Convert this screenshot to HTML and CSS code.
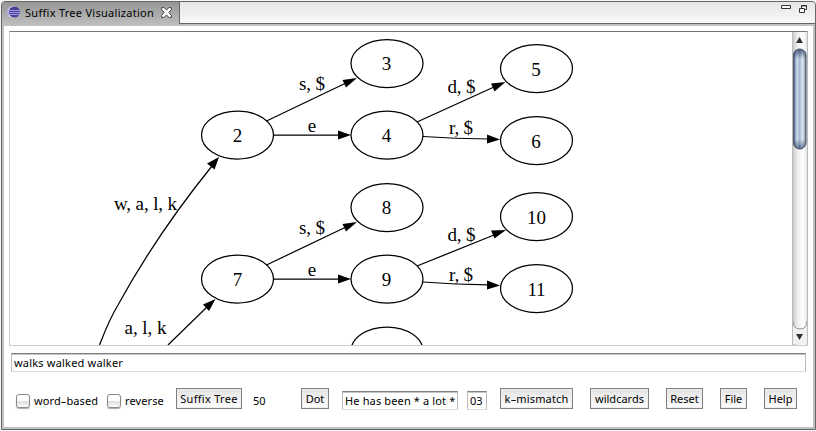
FILE: index.html
```html
<!DOCTYPE html>
<html lang="en">
<head>
<meta charset="utf-8">
<title>Suffix Tree Visualization</title>
<link rel="stylesheet" href="styles.css">
</head>
<body>
<main class="window">
  <header class="titlebar">
    <div class="tab">
      <svg class="logo" width="14" height="14" viewBox="0 0 14 14">
        <circle cx="6.200" cy="7" r="6" fill="#d9c8ea"/>
        <circle cx="7.400" cy="7" r="5.600" fill="#4c3f91"/>
        <path d="M0 5.500h13M0 7.500h13.500M1 9.500h12" stroke="#9c9ce8" stroke-width="1"/>
      </svg>
      <span class="t-title">Suffix Tree Visualization</span>
      <svg class="close" width="11" height="11" viewBox="0 0 11 11">
        <path d="M.6.6h2.6l2.3 2.5L7.8.6h2.6v2L7.800 5.500l2.600 2.900v2H7.800L5.500 7.900l-2.300 2.500H.6v-2l2.600-2.900L.6 2.600z" fill="#fff" stroke="#444"/>
      </svg>
    </div>
    <div class="strip">
      <svg width="10" height="5" viewBox="0 0 10 5"><path d="M.5.5h9v3h-9z" fill="#fff" stroke="#333"/></svg>
      <svg width="8" height="8" viewBox="0 0 8 8"><path d="M2.500.5h5v4h-5z" fill="#fff" stroke="#333"/><path d="M2 1h6" stroke="#333"/><path d="M.5 3.500h5v4h-5z" fill="#fff" stroke="#333"/></svg>
    </div>
  </header>
  <section class="body">
    <div class="canvas">
      <svg class="graph" width="782" height="313" viewBox="10 32 782 313">
        <g class="edges">
          <path d="M99.500 345C105 331 109 320 118 305C141 263 170 218 212 166"/>
          <path d="M168 345L207 307"/>
          <path d="M266.500 121L346 83"/><path d="M274 135H340"/>
          <path d="M417 122L494 87"/><path d="M423 136.500Q455 138.500 489 139"/>
          <path d="M266.500 265L346 227"/><path d="M274 279H340"/>
          <path d="M417 266L494 235"/><path d="M423 282Q455 284.500 489 284.800"/>
        </g>
        <g class="heads">
          <path d="M219 157L214.500 169.500L207 163.500z"/>
          <path d="M215.500 299L209 311L203 304.500z"/>
          <path d="M357 78L346 87.500L342.500 80z"/><path d="M351 135L338 139.500V130.500z"/>
          <path d="M505.500 82L494.500 91.500L491 83.500z"/><path d="M500 139.500L487 143.500V134.500z"/>
          <path d="M357 222L346 231.500L342.500 224z"/><path d="M351 279L338 283.500V274.500z"/>
          <path d="M506 230L494.500 238.500L491 230.500z"/><path d="M500 285.500L487 289.500V280.500z"/>
        </g>
        <g class="nodes">
          <ellipse cx="387" cy="63.500" rx="36" ry="24"/><ellipse cx="536.500" cy="68.500" rx="36" ry="24"/>
          <ellipse cx="237.500" cy="135" rx="36" ry="24"/><ellipse cx="387" cy="135" rx="36" ry="24"/>
          <ellipse cx="536.500" cy="140.500" rx="36" ry="24"/><ellipse cx="387" cy="207.500" rx="36" ry="24"/>
          <ellipse cx="536.500" cy="216.500" rx="36" ry="24"/><ellipse cx="237.500" cy="279" rx="36" ry="24"/>
          <ellipse cx="387" cy="279" rx="36" ry="24"/><ellipse cx="536.500" cy="288.500" rx="36" ry="24"/>
          <ellipse cx="387" cy="351" rx="36" ry="24"/>
        </g>
        <g class="labels">
          <text x="386.500" y="70">3</text><text x="536" y="76">5</text><text x="237.500" y="142">2</text>
          <text x="386.500" y="142">4</text><text x="536" y="148">6</text><text x="386.500" y="214">8</text>
          <text x="536.500" y="224">10</text><text x="237.500" y="286">7</text><text x="386.500" y="286">9</text>
          <text x="536.500" y="296" textLength="18">11</text>
          <text x="312" y="90" textLength="26">s, $</text><text x="312" y="132">e</text>
          <text x="461.500" y="93" textLength="28">d, $</text><text x="461" y="134" textLength="24">r, $</text>
          <text x="312" y="234" textLength="26">s, $</text><text x="312" y="276">e</text>
          <text x="461.500" y="241" textLength="28">d, $</text><text x="461" y="281" textLength="24">r, $</text>
          <text x="145.500" y="210" textLength="63">w, a, l, k</text><text x="145.500" y="334" textLength="42">a, l, k</text>
        </g>
      </svg>
      <svg class="scroll" width="16" height="313" viewBox="0 0 16 313">
        <defs>
          <linearGradient id="track"><stop offset="0" stop-color="#c4c4c4"/><stop offset=".35" stop-color="#eee"/><stop offset=".7" stop-color="#fff"/><stop offset="1" stop-color="#ddd"/></linearGradient>
          <linearGradient id="thumb"><stop offset="0" stop-color="#2c4166"/><stop offset=".13" stop-color="#8a9fbd"/><stop offset=".3" stop-color="#d0deec"/><stop offset=".48" stop-color="#a3b7cd"/><stop offset=".72" stop-color="#dde7f0"/><stop offset=".9" stop-color="#a3b1c0"/><stop offset="1" stop-color="#55616f"/></linearGradient>
          <linearGradient id="shade" x2="0" y2="1"><stop offset="0" stop-color="#102347" stop-opacity=".7"/><stop offset=".1" stop-color="#27436b" stop-opacity="0"/><stop offset=".9" stop-color="#27436b" stop-opacity="0"/><stop offset="1" stop-color="#102347" stop-opacity=".6"/></linearGradient>
        </defs>
        <path d="M0 0h16v313H0z" fill="url(#track)"/>
        <path d="M1 289Q1 297 8 297T15 289V312H1z" fill="#f1f1f1"/>
        <path d="M1 289Q1 297 8 297T15 289" fill="none" stroke="#999"/>
        <rect x="1.500" y="17" width="12.500" height="100" rx="6.200" fill="url(#thumb)"/>
        <rect x="1.500" y="17" width="12.500" height="100" rx="6.200" fill="url(#shade)" stroke="#4b586d"/>
        <path d="M7.500 5L11 11H4zM7.500 308L11 302H4z" fill="#333"/>
        <path d="M.5 0V313M15.500 0V313" stroke="#bbb"/>
      </svg>
    </div>
    <div class="field source"><span class="t-source">walks walked walker</span></div>
    <div class="controls">
      <i class="check"></i><span class="label t-word">word–based</span>
      <i class="check second"></i><span class="label t-reverse">reverse</span>
      <span class="btn b-suffix">Suffix Tree</span>
      <span class="label count">50</span>
      <span class="btn b-dot">Dot</span>
      <div class="field phrase"><span>He has been * a lot *</span></div>
      <div class="field number"><span>03</span></div>
      <span class="btn b-mismatch">k–mismatch</span>
      <span class="btn b-wild">wildcards</span>
      <span class="btn b-reset">Reset</span>
      <span class="btn b-file">File</span>
      <span class="btn b-help">Help</span>
    </div>
  </section>
</main>
</body>
</html>
```
FILE: styles.css
```css
* { box-sizing: border-box; }
body { margin: 0; background: #f4f4f4; color: #000; font: 11px/14px "Noto Sans", sans-serif; white-space: nowrap; overflow: hidden; }
.window { width: 815px; height: 429px; margin: 1px 0 0 1px; border: 1px solid #666; border-radius: 4px 4px 0 0; background: #c2c2c2; display: flex; flex-direction: column; overflow: hidden; }
.titlebar { display: flex; height: 24px; flex: none; }
.tab { width: 177px; display: flex; background: linear-gradient(#959595, #c0c0c0); }
.logo { margin: 3px 0 0 5px; }
.t-title { margin: 4px 0 0 4px; width: 130px; letter-spacing: .28px; }
.close { margin: 5px 0 0 6px; flex: none; }
.strip { flex: 1; height: 22px; border-left: 1px solid #666; border-bottom: 1px solid #666; background: linear-gradient(#e6e6e6, #f8f8f8); display: flex; justify-content: flex-end; gap: 8px; padding: 3px 8px 0 0; }
.body { flex: 1; margin: 0 2px 2px 2px; padding: 5px 5px 0; background: #fff; display: flex; flex-direction: column; }
.canvas { display: flex; flex: none; width: 799px; height: 315px; border: 1px solid #ccc; border-top-color: #777; }
.graph, .scroll { display: block; flex: none; }
.edges, .nodes { fill: none; stroke: #000; stroke-width: 1.25px; }
.labels { font: 19px "Liberation Serif", serif; text-anchor: middle; }
.field { border: 1px solid #bbb; border-top-color: #808080; border-bottom-color: #ddd; box-shadow: inset 0 1px 0 #c4c4c4; background: #fff; height: 19px; flex: none; padding: 1px 0 0 2px; line-height: 15px; }
.source { margin: 7px 0 0 2px; width: 795px; }
.t-source { letter-spacing: .2px; }
.controls { display: flex; align-items: flex-start; margin: 16px 0 0 7px; }
.check { width: 14px; height: 14px; margin-top: 6px; border: 1px solid #888; border-radius: 3px; background: linear-gradient(#fff 45%, #ddd 55%, #fff); box-shadow: 0 1px 1px #aaa; flex: none; }
.second { margin-left: 9px; }
.label { margin: 6px 0 0 4px; flex: none; }
.t-word { width: 64px; letter-spacing: .1px; }
.t-reverse { width: 39px; letter-spacing: .1px; }
.btn { height: 21px; margin-left: 17px; border: 1px solid #808080; box-shadow: inset 0 0 0 1px #eee; background: linear-gradient(#e2e2e2, #fff); line-height: 20px; text-align: center; flex: none; }
.b-suffix { width: 66px; margin-left: 12px; letter-spacing: .3px; }
.count { width: 14px; margin-left: 11px; }
.b-dot { width: 28px; margin-left: 34px; }
.phrase { width: 116px; margin: 3px 0 0 13px; letter-spacing: .14px; }
.number { width: 20px; margin: 3px 0 0 9px; }
.b-mismatch { width: 73px; margin-left: 13px; letter-spacing: .15px; }
.b-wild { width: 59px; }
.b-reset { width: 37px; }
.b-file { width: 27px; }
.b-help { width: 33px; }
```
